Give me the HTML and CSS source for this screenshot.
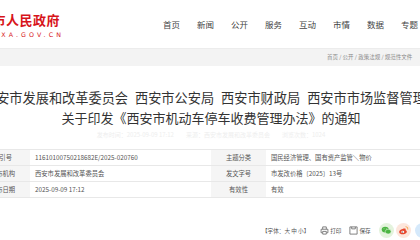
FILE: index.html
```html
<!DOCTYPE html>
<html>
<head>
	<meta charset="UTF-8">
	<title>关于印发《西安市机动车停车收费管理办法》的通知</title>
	<link rel="stylesheet" href="styles.css">
</head>
<body>
	<div class="header">
		<div class="logo">
			<div class="logo-name">西安市人民政府</div>
			<div class="logo-url">WWW.XA.GOV.CN</div>
		</div>
		<ul class="nav">
			<li>首页</li>
			<li>新闻</li>
			<li>公开</li>
			<li>服务</li>
			<li>互动</li>
			<li>市情</li>
			<li>数据</li>
			<li>专题</li>
		</ul>
	</div>
	<div class="crumb">
		<div class="crumb-in">首页 / 公开 / 政策法规 / 规范性文件</div>
	</div>
	<div class="main">
		<h1 class="title">
			<span class="line1">西安市发展和改革委员会 西安市公安局 西安市财政局 西安市市场监督管理局</span>
			<span class="line2">关于印发《西安市机动车停车收费管理办法》的通知</span>
		</h1>
		<div class="meta">发布时间：2025-09-09 17:12　　来源：西安市发展和改革委员会　　浏览次数：1024</div>
		<table class="info">
			<tr>
				<td class="lab">索引号</td>
				<td class="val">11610100750218682E/2025-020760</td>
				<td class="lab">主题分类</td>
				<td class="val">国民经济管理、国有资产监管＼物价</td>
			</tr>
			<tr>
				<td class="lab">发布机构</td>
				<td class="val">西安市发展和改革委员会</td>
				<td class="lab">发文字号</td>
				<td class="val">市发改价格〔2025〕13号</td>
			</tr>
			<tr>
				<td class="lab">发布日期</td>
				<td class="val">2025-09-09 17:12</td>
				<td class="lab">有效性</td>
				<td class="val">有效</td>
			</tr>
		</table>
		<div class="tools">
			<span class="fsize">【字体：大 中 小】</span>
			<span class="tool">
				<svg width="9" height="9" viewBox="0 0 10 10"><path d="M3 3.5V1h4v2.5M2.5 7.5H1.2V3.6h7.6v3.9H7.5M3 6h4v3H3z" fill="none" stroke="#666" stroke-width="0.9"/></svg>
				打印
			</span>
			<span class="tool">
				<svg width="9" height="9" viewBox="0 0 10 10"><path d="M1 1h8v8H1zM3 1v2.2h4V1" fill="none" stroke="#666" stroke-width="0.9"/></svg>
				保存
			</span>
			<span class="share wx">
				<svg width="11" height="11" viewBox="0 0 12 12"><ellipse cx="4.6" cy="5" rx="3.8" ry="3.1" fill="#4cb543"/><ellipse cx="7.8" cy="7.2" rx="3.2" ry="2.6" fill="#4cb543" stroke="#e6f4e0" stroke-width="0.6"/><circle cx="3.3" cy="4.2" r="0.5" fill="#e6f4e0"/><circle cx="5.8" cy="4.2" r="0.5" fill="#e6f4e0"/></svg>
			</span>
			<span class="share wb">
				<svg width="11" height="11" viewBox="0 0 12 12"><path d="M5 4.3C2.6 4.6 1 6.3 1.3 7.9 1.6 9.6 3.9 10.5 6.2 10.1 8.6 9.7 10 8.2 9.6 6.9 9.3 5.9 8.2 6.1 8.4 5.2 8.7 3.9 7.3 3.6 5 4.3z" fill="#e6472e"/><ellipse cx="5.2" cy="7.5" rx="1.6" ry="1.2" fill="#fff"/><circle cx="5" cy="7.6" r="0.6" fill="#333"/><path d="M8.3 1.8a2.6 2.6 0 0 1 2.4 3.2" fill="none" stroke="#f29322" stroke-width="0.8"/></svg>
			</span>
			<span class="share qq"></span>
		</div>
	</div>
</body>
</html>
```

FILE: styles.css
```css
html, body {margin: 0;padding: 0;}
body {width: 420px;height: 240px;overflow: hidden;background: #fff;font-family: "Noto Sans CJK SC", "Noto Sans", sans-serif;color: #333;}
ul {margin: 0;padding: 0;list-style: none;}

.header {height: 48px;display: flex;align-items: center;border-bottom: 1px solid #ececec;}
.logo {width: 100px;margin-left: -38px;text-align: right;padding-top: 2px;flex-shrink: 0;}
.logo-name {font-size: 13px;line-height: 16px;font-weight: bold;color: #d7141a;letter-spacing: 0.5px;margin-right: 2px;}
.logo-url {font-size: 6.3px;line-height: 8px;margin-top: 3px;color: #d7141a;letter-spacing: 3.1px;margin-right: -2px;font-family: "DejaVu Sans", sans-serif;}
.nav {display: flex;margin-left: 101px;}
.nav li {font-size: 8.5px;line-height: 12px;color: #444;margin-right: 17px;white-space: nowrap;}

.crumb {height: 17px;background: #f3f3f3;}
.crumb-in {padding-left: 327px;font-size: 5.5px;line-height: 17px;color: #8a8a8a;white-space: nowrap;}

.main {width: 472px;margin-left: -25px;}
.title {margin: 22px 0 0;font-size: 13px;font-weight: normal;line-height: 20px;color: #333;display: flex;flex-direction: column;align-items: center;}
.title span {white-space: nowrap;}
.title .line1 {font-size: 13.2px;word-spacing: 4px;}
.meta {margin-top: 3px;font-size: 6px;line-height: 8px;text-align: center;color: #eeeeee;white-space: nowrap;}

.info {width: 100%;margin-top: 10px;border-collapse: collapse;border-top: 1px solid #e8e8e8;}
.info td {height: 15px;padding: 0;border-bottom: 1px solid #e8e8e8;font-size: 6.3px;color: #555;}
.info td.lab {width: 55px;background: #f5f5f5;text-align: center;}
.info td.val {width: 176px;padding-left: 5px;}

.tools {display: flex;align-items: center;padding-left: 287px;margin-top: 25px;font-size: 5.6px;color: #555;white-space: nowrap;}
.fsize {margin-right: 11px;}
.tool {display: flex;align-items: center;margin-right: 8px;}
.tool svg {margin-right: 1px;}
.share {width: 15px;height: 15px;border-radius: 50%;display: flex;align-items: center;justify-content: center;margin-right: 2px;flex-shrink: 0;}
.share.wx {background: #e4f3dd;}
.share.wb {background: #fde6dc;}
.share.qq {background: #d5e9fb;margin-left: 2px;}
```
